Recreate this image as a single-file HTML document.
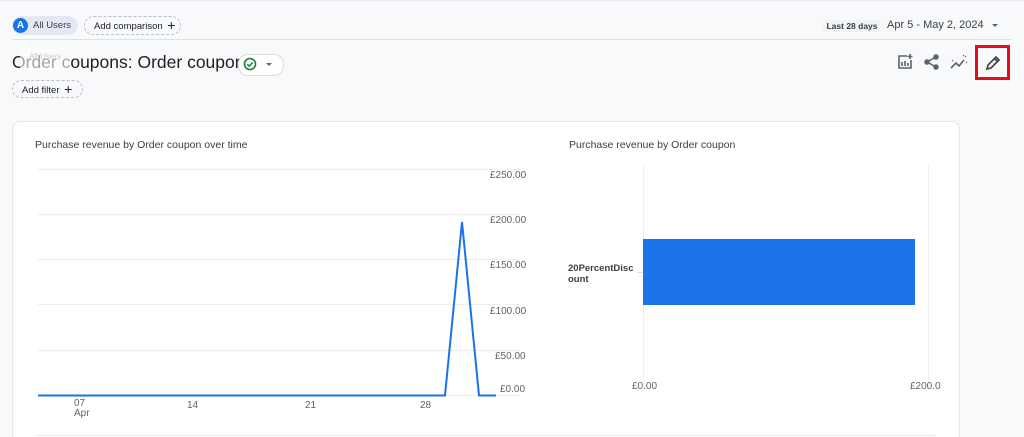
<!DOCTYPE html>
<html><head><style>
html,body{margin:0;width:1024px;height:437px;overflow:hidden}
body{background:#f8f9fa;font-family:"Liberation Sans",Arial,sans-serif;position:relative;color:#202124}
.a{position:absolute}
.t{font-size:10px;color:#5f6368}
</style></head><body>
<div class="a" style="left:0;top:0;width:1024px;height:1px;background:#e8eaed"></div>
<div class="a" style="left:12px;top:16px;width:66px;height:19px;border-radius:10px;background:#e3e8f4"></div>
<div class="a" style="left:13px;top:18px;width:15px;height:15px;border-radius:50%;background:#1a73e8;color:#fff;font-size:10px;font-weight:bold;text-align:center;line-height:15px">A</div>
<div class="a" style="left:33px;top:20px;font-size:9.5px;color:#3c4043">All Users</div>
<div class="a" style="left:84px;top:16px;width:97px;height:19px;border:1px dashed #bdc1c6;border-radius:10px;font-size:9.5px;line-height:17px;padding-left:9px;box-sizing:border-box;color:#202124">Add comparison <span style="font-size:14px;vertical-align:-1px;margin-left:2px">+</span></div>
<div class="a" style="left:12px;top:39px;width:1000px;height:1px;background:#e0e0e0"></div>
<div class="a" style="left:12px;top:52px;font-size:17.5px;color:#202124;white-space:nowrap">Order coupons: Order coupon</div>
<div class="a" style="left:20px;top:42px;width:51px;height:30px;background:rgba(252,252,252,0.6);border-radius:3px;font-size:8px;color:#c8c8c8;padding:10px 0 0 9px;box-sizing:border-box">All Users</div>
<div class="a" style="left:238px;top:54px;width:44px;height:20px;border:1px solid #dadce0;border-radius:10px;background:#fff"></div>
<svg class="a" style="left:243px;top:57px" width="14" height="14"><circle cx="7" cy="7" r="5.5" fill="none" stroke="#188038" stroke-width="1.6"/><path d="M4.3 7.2l1.9 1.9 3.5-3.6" fill="none" stroke="#188038" stroke-width="1.5"/></svg>
<div class="a" style="left:266px;top:63px;border:3px solid transparent;border-top:3px solid #5f6368"></div>
<div class="a" style="left:12px;top:80px;width:71px;height:18px;border:1px dashed #bdc1c6;border-radius:10px;font-size:9.5px;line-height:17px;padding-left:9px;box-sizing:border-box">Add filter <span style="font-size:14px;vertical-align:-1px;margin-left:2px">+</span></div>
<div class="a" style="left:823px;top:20px;width:58px;height:12px;background:#f1f3f4;font-size:8.5px;color:#3c4043;line-height:12px;text-align:center;font-weight:bold">Last 28 days</div>
<div class="a" style="left:887px;top:19px;font-size:11px;color:#3c4043">Apr 5 - May 2, 2024</div>
<div class="a" style="left:992px;top:24px;border:3px solid transparent;border-top:3px solid #5f6368"></div>
<svg class="a" style="left:896px;top:53px" width="18" height="18" fill="none" stroke="#5f6368" stroke-width="1.6"><path d="M11 3H3v12h12V7"/><path d="M6 13V9M9 13V8M12 13v-3"/><path d="M14 1v5M11.5 3.5h5"/></svg>
<svg class="a" style="left:923px;top:53px" width="18" height="18" fill="#5f6368" stroke="#5f6368" stroke-width="1.5"><circle cx="13" cy="4" r="2"/><circle cx="4" cy="9" r="2"/><circle cx="13" cy="14" r="2"/><path d="M13 4L4 9l9 5" fill="none"/></svg>
<svg class="a" style="left:950px;top:53px" width="18" height="18" fill="none" stroke="#5f6368" stroke-width="1.6"><path d="M1 15l5-5 3 3 5-6"/><path d="M2 8l1-1M13 2l1 1M15 4l1-1M17 9l-1 1" stroke-width="1.2"/></svg>
<div class="a" style="left:975px;top:45px;width:35px;height:35px;border:3px solid #e0101a;box-sizing:border-box"></div>
<svg class="a" style="left:984px;top:54px" width="18" height="18" fill="none" stroke="#3c4043" stroke-width="1.6"><path d="M3 15l1-4 8-8 3 3-8 8z"/><path d="M10.5 4.5l3 3"/></svg>
<div class="a" style="left:12px;top:121px;width:948px;height:330px;background:#fff;border:1px solid #e6e6e6;border-radius:8px;box-sizing:border-box"></div>
<div class="a" style="left:35px;top:139px;font-size:10.5px;color:#3c4043">Purchase revenue by Order coupon over time</div>
<div class="a" style="left:569px;top:139px;font-size:10.5px;color:#3c4043">Purchase revenue by Order coupon</div>
<svg class="a" style="left:0;top:0" width="1024" height="437">
<g stroke="#eeeeee" stroke-width="1"><path d="M38 169.5H520M38 214.5H520M38 259.5H520M38 304.5H520M38 350.5H520M38 395.5H520"/><path d="M643.5 166V388M928.5 166V388"/></g>
<path d="M38 395.5H445L462 222 479 395.5H496" fill="none" stroke="#1a73e8" stroke-width="2"/>
<rect x="643" y="239" width="272" height="66" fill="#1a73e8"/>
<path d="M637 272.5H643" stroke="#ddd"/>
</svg>
<div class="a t" style="left:490px;top:170px">£250.00</div>
<div class="a t" style="left:490px;top:215px">£200.00</div>
<div class="a t" style="left:490px;top:260px">£150.00</div>
<div class="a t" style="left:490px;top:306px">£100.00</div>
<div class="a t" style="left:495px;top:351px">£50.00</div>
<div class="a t" style="left:500px;top:384px">£0.00</div>
<div class="a t" style="left:74px;top:399px;line-height:10px">07<br>Apr</div>
<div class="a t" style="left:187px;top:400px">14</div>
<div class="a t" style="left:305px;top:400px">21</div>
<div class="a t" style="left:420px;top:400px">28</div>
<div class="a" style="left:568px;top:263px;font-size:9.5px;color:#3c4043;line-height:11px;font-weight:bold">20PercentDisc<br>ount</div>
<div class="a t" style="left:632px;top:381px">£0.00</div>
<div class="a t" style="left:910px;top:381px">£200.0</div>
<div class="a" style="left:35px;top:435px;width:900px;height:1px;background:#e8e8e8"></div>
</body></html>
